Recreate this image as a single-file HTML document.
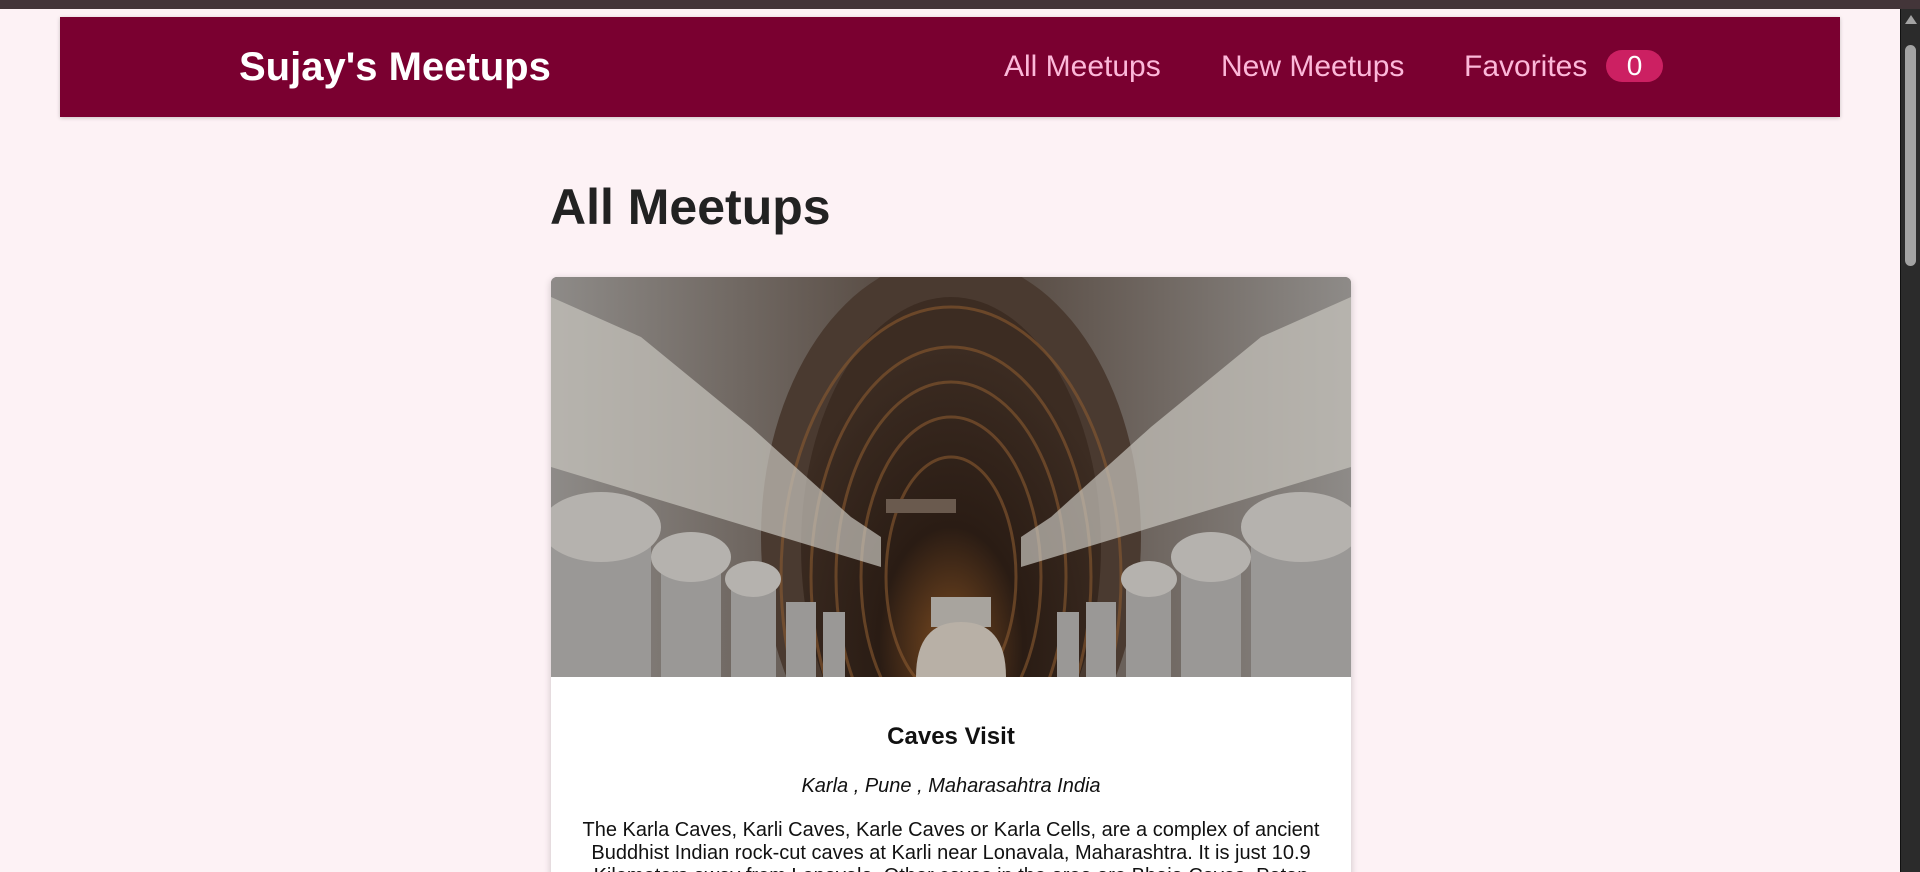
<!DOCTYPE html>
<html><head><meta charset="utf-8"><style>
html,body{margin:0;padding:0;width:1920px;height:872px;overflow:hidden;}
body{background:#fdf2f5;font-family:"Liberation Sans",Arial,sans-serif;position:relative;}
.topbar{position:absolute;left:0;top:0;width:1920px;height:9px;background:#433539;}
.sb{position:absolute;left:1900px;top:9px;width:20px;height:863px;background:#2b2b2b;border-left:1px solid #111;}
.thumb{position:absolute;left:1905px;top:45px;width:11px;height:221px;background:#a3a3a3;border-radius:6px;}
.arrow{position:absolute;left:1905px;top:15px;width:0;height:0;border-left:6px solid transparent;border-right:6px solid transparent;border-bottom:9px solid #a3a3a3;}
header{position:absolute;left:60px;top:17px;width:1780px;height:100px;background:#7a0030;box-shadow:0 1px 4px rgba(0,0,0,.2);}
.logo{position:absolute;left:179px;top:27px;font-size:40px;font-weight:bold;color:#fff;line-height:46px;}
.nav{position:absolute;top:32px;font-size:30px;color:#fcb8d9;line-height:36px;}
.badge{position:absolute;left:1546px;top:33px;width:57px;height:32px;background:#cc2062;border-radius:16px;color:#fff;font-size:28px;text-align:center;line-height:32px;}
h1{position:absolute;left:550px;top:177px;margin:0;font-size:50px;font-weight:bold;color:#222;line-height:60px;}
.card{position:absolute;left:551px;top:277px;width:800px;height:620px;background:#fff;border-radius:6px;box-shadow:0 2px 8px rgba(0,0,0,.2);overflow:hidden;}
.card svg{display:block;}
.t{position:absolute;left:0;width:800px;text-align:center;color:#111;}
</style></head><body>
<div class="topbar"></div>
<header>
<div class="logo">Sujay's Meetups</div>
<div class="nav" style="left:944px">All Meetups</div>
<div class="nav" style="left:1161px">New Meetups</div>
<div class="nav" style="left:1404px">Favorites</div>
<div class="badge">0</div>
</header>
<h1>All Meetups</h1>
<div class="card">
<svg width="800" height="400" viewBox="0 0 800 400">
<defs>
<linearGradient id="lw" x1="0" x2="1"><stop offset="0" stop-color="#8e8b88"/><stop offset="1" stop-color="#5a4e46"/></linearGradient>
<linearGradient id="rw" x1="1" x2="0"><stop offset="0" stop-color="#8e8b88"/><stop offset="1" stop-color="#5a4e46"/></linearGradient>
<radialGradient id="arch" cx=".5" cy=".7" r=".6"><stop offset="0" stop-color="#7a4a20"/><stop offset=".4" stop-color="#2a1c14"/><stop offset="1" stop-color="#3c2c22"/></radialGradient>
</defs>
<rect width="800" height="400" fill="#6d6560"/>
<rect x="0" width="330" height="400" fill="url(#lw)"/>
<rect x="470" width="330" height="400" fill="url(#rw)"/>
<ellipse cx="400" cy="260" rx="190" ry="280" fill="#4a3a30"/>
<ellipse cx="400" cy="270" rx="150" ry="250" fill="url(#arch)"/>
<g fill="none" stroke="#8a5a30" stroke-width="3" opacity=".6">
<ellipse cx="400" cy="300" rx="170" ry="270"/><ellipse cx="400" cy="300" rx="140" ry="230"/>
<ellipse cx="400" cy="300" rx="115" ry="195"/><ellipse cx="400" cy="300" rx="90" ry="160"/>
<ellipse cx="400" cy="300" rx="65" ry="120"/>
</g>
<g fill="#9a9896">
<rect x="0" y="260" width="100" height="140"/><rect x="110" y="290" width="60" height="110"/>
<rect x="180" y="310" width="45" height="90"/><rect x="235" y="325" width="30" height="75"/>
<rect x="272" y="335" width="22" height="65"/><rect x="700" y="260" width="100" height="140"/>
<rect x="630" y="290" width="60" height="110"/><rect x="575" y="310" width="45" height="90"/>
<rect x="535" y="325" width="30" height="75"/><rect x="506" y="335" width="22" height="65"/>
</g>
<g fill="#b5b2ae">
<ellipse cx="50" cy="250" rx="60" ry="35"/><ellipse cx="140" cy="280" rx="40" ry="25"/>
<ellipse cx="202" cy="302" rx="28" ry="18"/><ellipse cx="750" cy="250" rx="60" ry="35"/>
<ellipse cx="660" cy="280" rx="40" ry="25"/><ellipse cx="598" cy="302" rx="28" ry="18"/>
</g>
<g fill="#c8c4be" opacity=".7">
<path d="M0 20 L90 60 L200 150 L300 240 L330 260 L330 290 L0 190Z"/>
<path d="M800 20 L710 60 L600 150 L500 240 L470 260 L470 290 L800 190Z"/>
</g>
<rect x="335" y="222" width="70" height="14" fill="#6a5a4e"/>
<rect x="380" y="320" width="60" height="30" fill="#a8a49e"/>
<path d="M365 400 Q365 345 410 345 Q455 345 455 400Z" fill="#b8b0a6"/>
</svg>
<div class="t" style="top:446px;font-size:24px;font-weight:bold;">Caves Visit</div>
<div class="t" style="top:498px;font-size:20px;font-style:italic;">Karla , Pune , Maharasahtra India</div>
<div class="t" style="top:542px;font-size:20px;line-height:23px;padding:0 24px;box-sizing:border-box;">The Karla Caves, Karli Caves, Karle Caves or Karla Cells, are a complex of ancient Buddhist Indian rock-cut caves at Karli near Lonavala, Maharashtra. It is just 10.9 Kilometers away from Lonavala. Other caves in the area are Bhaja Caves, Patan Buddhist Cave, Bedse Caves and Nasik Caves.</div>
</div>
<div class="sb"></div><div class="arrow"></div><div class="thumb"></div>
</body></html>
